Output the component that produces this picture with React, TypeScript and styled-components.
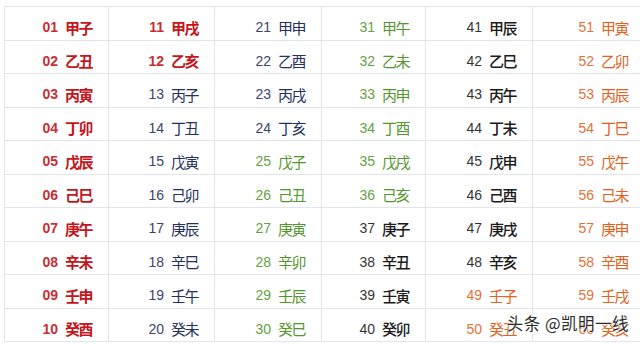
import React from 'react';
import styled, {createGlobalStyle} from "styled-components";

const GlobalStyle = createGlobalStyle`
  html, body {
    margin: 0;
    padding: 0;
    background: #ffffff;
    overflow: hidden;
  }
`

type Tone = "red" | "navy" | "green" | "black" | "orange"

const toneColors: Record<Tone, string> = {
    red: "#c3161c",
    navy: "#26305c",
    green: "#55972e",
    black: "#1b1b1b",
    orange: "#e2621d",
}

const toneWeights: Record<Tone, number> = {
    red: 700,
    navy: 400,
    green: 400,
    black: 500,
    orange: 400,
}

const stems = ["甲", "乙", "丙", "丁", "戊", "己", "庚", "辛", "壬", "癸"]
const branches = ["子", "丑", "寅", "卯", "辰", "巳", "午", "未", "申", "酉", "戌", "亥"]

const toneFor = (n: number): Tone => {
    if (n <= 12) return "red"
    if (n <= 24) return "navy"
    if (n <= 36) return "green"
    if (n <= 48) return "black"
    return "orange"
}

const Page = styled.div`
  position: relative;
  width: 640px;
  height: 344px;
  padding: 6px 0 0 4px;
  box-sizing: border-box;
  overflow: hidden;
`

const Table = styled.div`
  display: grid;
  grid-template-columns: 104px 106px 107px 104px 107px 112px;
  grid-auto-rows: 33.5px;
  border-top: 1px solid #e3e5ec;
  border-left: 1px solid #e3e5ec;
  width: max-content;
`

const Cell = styled.div<{ $tone: Tone }>`
  display: flex;
  align-items: center;
  justify-content: flex-end;
  gap: 7px;
  padding: 8px 16px 0 0;
  box-sizing: border-box;
  border-right: 1px solid #e3e5ec;
  border-bottom: 1px solid #e3e5ec;
  color: ${p => toneColors[p.$tone]};
  font-weight: ${p => toneWeights[p.$tone]};
  white-space: nowrap;
`

const Num = styled.span`
  font-family: "Liberation Sans", Arial, sans-serif;
  font-size: 14px;
  opacity: .9;
`

const Pair = styled.span`
  font-family: "Noto Sans CJK SC", sans-serif;
  font-size: 15px;
  letter-spacing: -1.5px;
`

const Watermark = styled.div`
  position: absolute;
  right: 11px;
  bottom: 9px;
  font-family: "Noto Sans CJK SC", sans-serif;
  font-size: 16.5px;
  color: #2a2a2a;
  text-shadow: 0 0 2px #fff, 0 0 2px #fff, 0 0 3px #fff;
  letter-spacing: 0.5px;
`

const App = () => {
    const rows = Array.from({length: 10}, (_, r) => r)
    const cols = Array.from({length: 6}, (_, c) => c)

    return (
        <Page>
            <GlobalStyle/>
            <Table>
                {rows.map(r => cols.map(c => {
                    const n = c * 10 + r + 1
                    const label = stems[(n - 1) % 10] + branches[(n - 1) % 12]
                    return (
                        <Cell key={n} $tone={toneFor(n)}>
                            <Num>{String(n).padStart(2, "0")}</Num>
                            <Pair>{label}</Pair>
                        </Cell>
                    )
                }))}
            </Table>
            <Watermark>头条 @凯明一线</Watermark>
        </Page>
    );
};

export default App;
